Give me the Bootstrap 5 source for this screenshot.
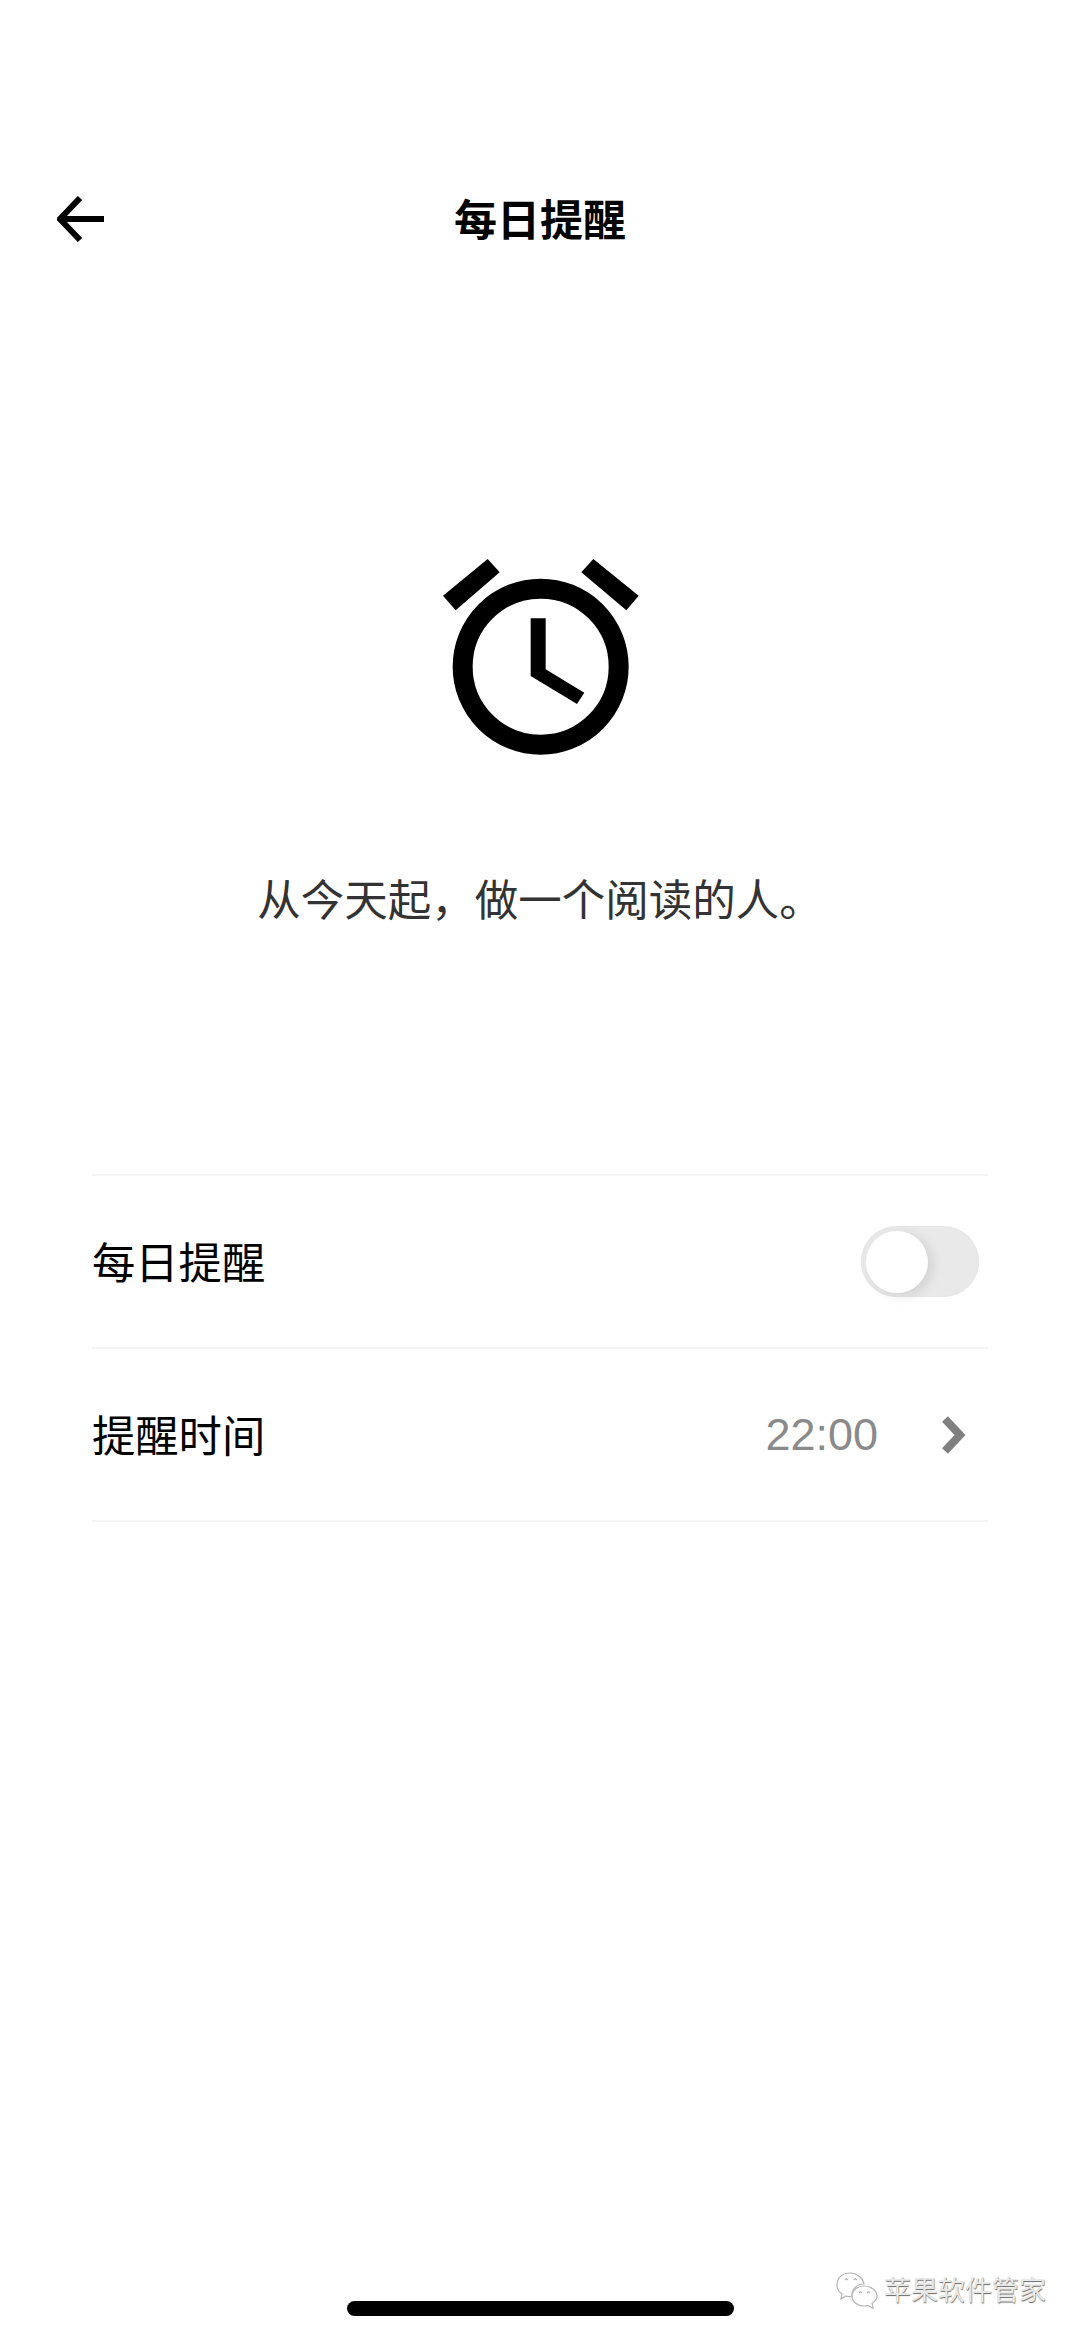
<!DOCTYPE html>
<html lang="zh">
<head>
<meta charset="utf-8">
<title>每日提醒</title>
<link href="https://cdn.jsdelivr.net/npm/bootstrap@5.3.0/dist/css/bootstrap.min.css" rel="stylesheet">
<style>
html,body{margin:0;height:2339px;overflow:hidden;background:#fff;}
body{font-family:"Liberation Sans","Noto Sans CJK SC",sans-serif;position:relative;}
.screen{height:2339px;}
.topbar{height:88px;margin-top:175px;padding:0 57px;}
.back-icon{display:block;width:48px;height:46px;}
.top-title{font-size:43px;font-weight:700;color:#000;line-height:88px;margin:0;padding:3px 48px 0 0;flex:1;text-align:center;}
.hero-icon{display:block;width:280px;height:250px;margin:267px auto 0;}
.hero-text{font-size:43.5px;color:#333;font-weight:400;line-height:60px;margin:91px 0 0;text-align:center;}
.set-list{margin:243px 92px 0;border-top:2px solid #f4f4f4;}
.set-row{height:173px;border-bottom:2px solid #f4f4f4;font-size:43.3px;font-weight:400;color:#000;padding-right:9px;}
.row-label{padding-top:5px;}
.switch-track{width:118px;height:71px;border-radius:36px;background:#e9e9e9;padding:5px 0 0 5px;box-shadow:inset 0 0 2px #ddd;}
.switch-knob{width:62px;height:62px;border-radius:50%;background:#fff;box-shadow:5px 3px 12px rgba(0,0,0,.1);}
.time-val{font-size:45px;color:#8a8a8a;margin-right:64px;line-height:1;}
.chev{display:block;width:24px;height:38px;margin-right:13px;}
.home-bar{width:387px;height:15px;border-radius:8px;background:#000;position:absolute;left:347px;top:2301px;}
.wm{position:absolute;left:836px;top:2272px;gap:6px;}
.wm-text{font-size:27px;line-height:38px;color:#e8e8e8;text-shadow:.5px .5px 1px #666;}
</style>
</head>
<body>
<div class="screen d-flex flex-column">
  <header class="topbar d-flex align-items-center">
    <svg class="back-icon" viewBox="0 0 48 46" fill="none" stroke="#000" stroke-width="6"><path d="M23 2 3 23 23 44"/><path d="M3 23H47"/></svg>
    <h1 class="top-title">每日提醒</h1>
  </header>
  <svg class="hero-icon" viewBox="0 0 840 750" fill="#000">
    <polygon points="263,87 299,127 167,241 129,197"/>
    <polygon points="580,87 544,127 679,241 716,197"/>
    <circle cx="422" cy="410" r="234" fill="none" stroke="#000" stroke-width="60"/>
    <polygon points="392,265 437,265 437,418 553,488 531,522 392,438"/>
  </svg>
  <p class="hero-text">从今天起，做一个阅读的人。</p>
  <div class="set-list">
    <div class="set-row d-flex align-items-center justify-content-between">
      <span class="row-label">每日提醒</span>
      <div class="switch-track"><div class="switch-knob"></div></div>
    </div>
    <div class="set-row d-flex align-items-center">
      <span class="row-label flex-grow-1">提醒时间</span>
      <span class="time-val">22:00</span>
      <svg class="chev" viewBox="0 0 24 38" fill="none" stroke="#808080" stroke-width="8"><path d="M3 3 18 19 3 35"/></svg>
    </div>
  </div>
</div>
<div class="wm d-flex align-items-center">
  <svg width="42" height="38" viewBox="0 0 42 38" fill="#fff" stroke="#b5b5b5" stroke-width="1.2"><path d="M14 1C6 1 1 6 1 13c0 4 2 7 5 9l-1 5 5-3c2 .6 4 .7 6 .5C15 18 20 12 28 12 27 6 21 1 14 1Z"/><path d="M28 14c-7 0-12 4.500-12 10s5 10 12 10c2 0 3-.2 4-.6l5 3-1-5c3-2 5-4.500 5-7.400 0-5.500-6-10-13-10Z"/><path d="M9 8l1.500-1.500L12 8M18 8l1.500-1.500L21 8M23 21l1.500-1.500L26 21M31 21l1.500-1.500L34 21" fill="none"/></svg>
  <span class="wm-text">苹果软件管家</span>
</div>
<div class="home-bar"></div>
<script src="https://cdn.jsdelivr.net/npm/bootstrap@5.3.0/dist/js/bootstrap.bundle.min.js"></script>
</body>
</html>
